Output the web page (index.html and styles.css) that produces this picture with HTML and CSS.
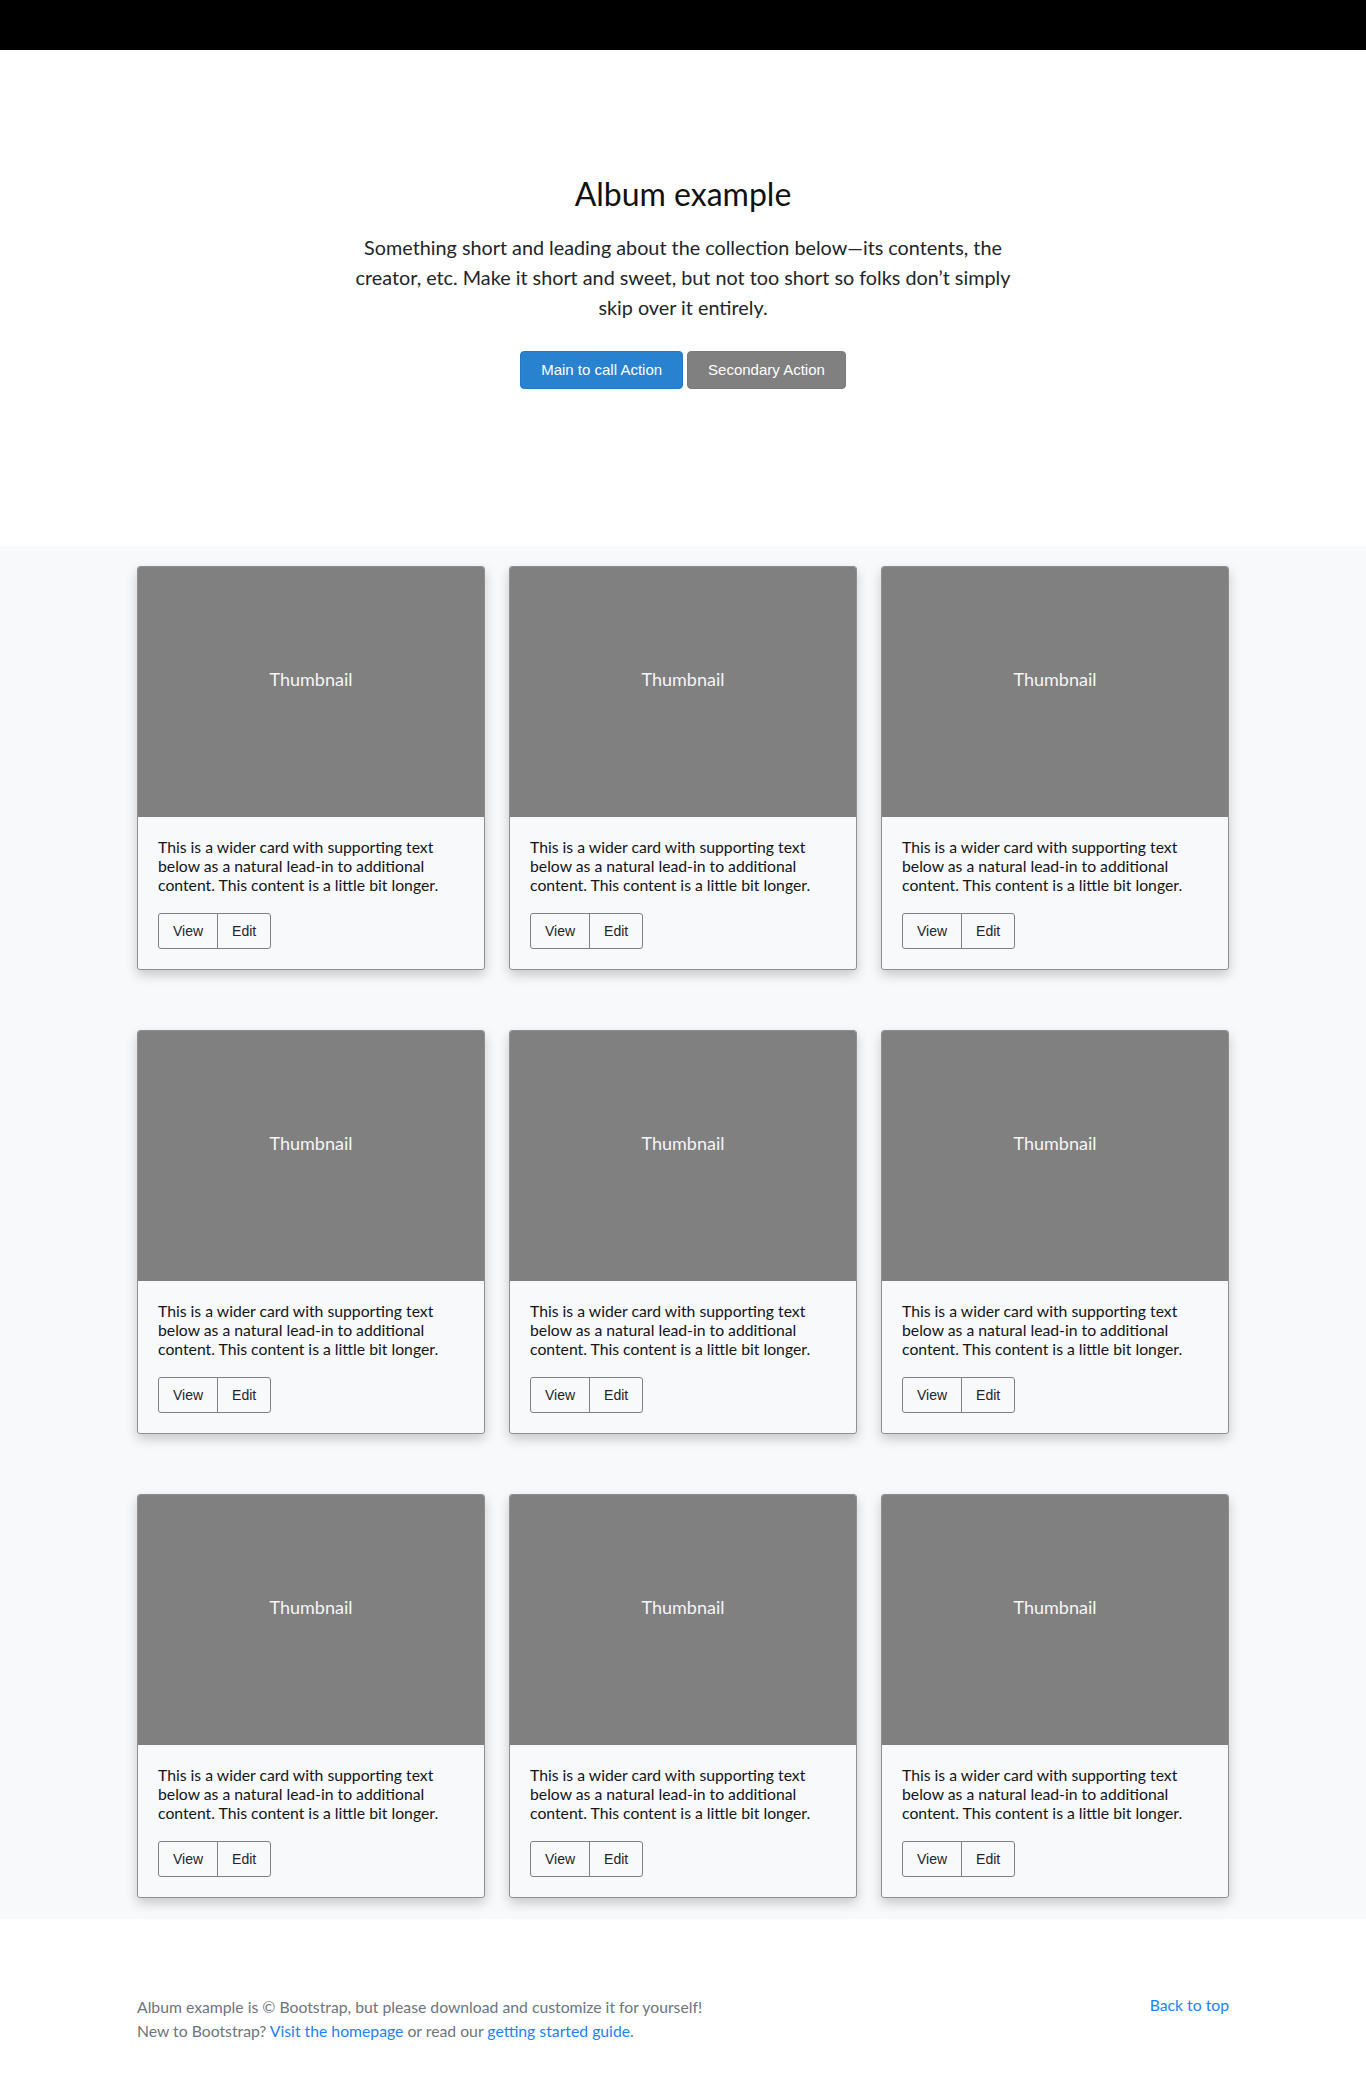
FILE: index.html
```html
<!DOCTYPE html>
<html lang="en">
<head>
<meta charset="utf-8">
<title>Album example</title>
<link rel="stylesheet" href="styles.css">
</head>
<body>
<header class="topbar"></header>
<main>
  <section class="hero">
    <h1 class="hero-title">Album example</h1>
    <p class="hero-lead">Something short and leading about the collection below—its contents, the creator, etc. Make it short and sweet, but not too short so folks don’t simply skip over it entirely.</p>
    <div class="hero-actions">
      <a href="#" class="btn btn-primary">Main to call Action</a>
      <a href="#" class="btn btn-secondary">Secondary Action</a>
    </div>
  </section>

  <div class="album">
    <div class="container">
      <div class="grid">
        <div class="card">
          <div class="thumb"><span>Thumbnail</span></div>
          <div class="card-body">
            <p class="card-text">This is a wider card with supporting text below as a natural lead-in to additional content. This content is a little bit longer.</p>
            <div class="btn-group"><button class="btn-sm">View</button><button class="btn-sm">Edit</button></div>
          </div>
        </div>
        <div class="card">
          <div class="thumb"><span>Thumbnail</span></div>
          <div class="card-body">
            <p class="card-text">This is a wider card with supporting text below as a natural lead-in to additional content. This content is a little bit longer.</p>
            <div class="btn-group"><button class="btn-sm">View</button><button class="btn-sm">Edit</button></div>
          </div>
        </div>
        <div class="card">
          <div class="thumb"><span>Thumbnail</span></div>
          <div class="card-body">
            <p class="card-text">This is a wider card with supporting text below as a natural lead-in to additional content. This content is a little bit longer.</p>
            <div class="btn-group"><button class="btn-sm">View</button><button class="btn-sm">Edit</button></div>
          </div>
        </div>
        <div class="card">
          <div class="thumb"><span>Thumbnail</span></div>
          <div class="card-body">
            <p class="card-text">This is a wider card with supporting text below as a natural lead-in to additional content. This content is a little bit longer.</p>
            <div class="btn-group"><button class="btn-sm">View</button><button class="btn-sm">Edit</button></div>
          </div>
        </div>
        <div class="card">
          <div class="thumb"><span>Thumbnail</span></div>
          <div class="card-body">
            <p class="card-text">This is a wider card with supporting text below as a natural lead-in to additional content. This content is a little bit longer.</p>
            <div class="btn-group"><button class="btn-sm">View</button><button class="btn-sm">Edit</button></div>
          </div>
        </div>
        <div class="card">
          <div class="thumb"><span>Thumbnail</span></div>
          <div class="card-body">
            <p class="card-text">This is a wider card with supporting text below as a natural lead-in to additional content. This content is a little bit longer.</p>
            <div class="btn-group"><button class="btn-sm">View</button><button class="btn-sm">Edit</button></div>
          </div>
        </div>
        <div class="card">
          <div class="thumb"><span>Thumbnail</span></div>
          <div class="card-body">
            <p class="card-text">This is a wider card with supporting text below as a natural lead-in to additional content. This content is a little bit longer.</p>
            <div class="btn-group"><button class="btn-sm">View</button><button class="btn-sm">Edit</button></div>
          </div>
        </div>
        <div class="card">
          <div class="thumb"><span>Thumbnail</span></div>
          <div class="card-body">
            <p class="card-text">This is a wider card with supporting text below as a natural lead-in to additional content. This content is a little bit longer.</p>
            <div class="btn-group"><button class="btn-sm">View</button><button class="btn-sm">Edit</button></div>
          </div>
        </div>
        <div class="card">
          <div class="thumb"><span>Thumbnail</span></div>
          <div class="card-body">
            <p class="card-text">This is a wider card with supporting text below as a natural lead-in to additional content. This content is a little bit longer.</p>
            <div class="btn-group"><button class="btn-sm">View</button><button class="btn-sm">Edit</button></div>
          </div>
        </div>
      </div>
    </div>
  </div>
</main>
<footer class="footer">
  <div class="container footer-inner">
    <div class="footer-text">
      <p>Album example is © Bootstrap, but please download and customize it for yourself!</p>
      <p>New to Bootstrap? <a href="#">Visit the homepage</a> or read our <a href="#">getting started guide</a>.</p>
    </div>
    <p class="back-top"><a href="#">Back to top</a></p>
  </div>
</footer>
</body>
</html>
```
FILE: styles.css
```css
* { box-sizing: border-box; }

body {
  margin: 0;
  font-family: Lato, "Open Sans", "Liberation Sans", sans-serif;
  color: #212529;
  background: #ffffff;
}

.topbar {
  height: 50px;
  background: #000000;
}

.hero {
  padding: 120px 0 157px;
  text-align: center;
}

.hero-title {
  margin: 0 0 14px;
  font-size: 32px;
  line-height: 48px;
  font-weight: 400;
  color: #111111;
}

.hero-lead {
  max-width: 670px;
  margin: 0 auto 29px;
  font-size: 19.8px;
  line-height: 30px;
  color: #212529;
}

.hero-actions {
  display: flex;
  justify-content: center;
  gap: 4px;
}

.btn {
  display: inline-block;
  padding: 7px 20px;
  font-family: "Liberation Sans", Arial, sans-serif;
  font-size: 15px;
  line-height: 22px;
  color: #ffffff;
  text-decoration: none;
  border: 1px solid transparent;
  border-radius: 4px;
}

.btn-primary {
  background: #2882cf;
  border-color: #2279c4;
}

.btn-secondary {
  background: #808080;
  border-color: #7a7a7a;
}

.album {
  background: #f8f9fa;
  padding: 20px 0 21px;
}

.container {
  width: 1092px;
  margin: 0 auto;
}

.grid {
  display: grid;
  grid-template-columns: repeat(3, 1fr);
  column-gap: 24px;
  row-gap: 60px;
}

.card {
  background: #f8f9fa;
  border: 1px solid #8f8f8f;
  border-radius: 3px;
  overflow: hidden;
  box-shadow: 0 5px 12px rgba(0, 0, 0, 0.2);
}

.thumb {
  height: 250px;
  background: #808080;
  display: flex;
  align-items: center;
  justify-content: center;
  padding-bottom: 27px;
  color: #f4f5f6;
  font-size: 18px;
}

.card-body {
  padding: 20px 20px 20px;
}

.card-text {
  margin: 0 0 19px;
  font-size: 15.75px;
  line-height: 19px;
  color: #111418;
}

.btn-group {
  display: flex;
}

.btn-sm {
  font-family: "Liberation Sans", Arial, sans-serif;
  font-size: 14px;
  line-height: 20px;
  padding: 7px 14px;
  background: transparent;
  color: #212529;
  border: 1px solid #808080;
  border-radius: 3px;
  margin: 0;
}

.btn-sm + .btn-sm {
  margin-left: -1px;
  border-top-left-radius: 0;
  border-bottom-left-radius: 0;
}

.btn-group .btn-sm:first-child {
  border-top-right-radius: 0;
  border-bottom-right-radius: 0;
}

.footer {
  padding: 76px 0 50px;
  color: #6c757d;
  font-size: 15.75px;
  line-height: 24px;
}

.footer-inner {
  display: flex;
  justify-content: space-between;
  align-items: flex-start;
}

.footer-text p {
  margin: 0;
}

.back-top {
  margin: -2px 0 0;
}

.footer a {
  color: #1a82f7;
  text-decoration: none;
}
```
